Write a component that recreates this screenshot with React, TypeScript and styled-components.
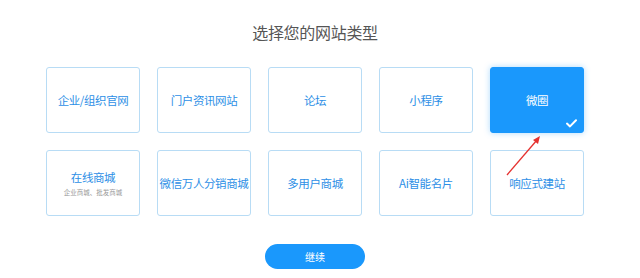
import { FC } from 'react';
import styled, { createGlobalStyle } from 'styled-components';

const GlobalStyle = createGlobalStyle`
  body {
    margin: 0;
    background: #fff;
    font-family: "Noto Sans CJK SC", "Liberation Sans", sans-serif;
  }
`;

type SiteType = {
  name: string;
  sub?: string;
  active?: boolean;
};

const types: SiteType[] = [
  { name: '企业/组织官网' },
  { name: '门户资讯网站' },
  { name: '论坛' },
  { name: '小程序' },
  { name: '微圈', active: true },
  { name: '在线商城', sub: '企业商城、批发商城' },
  { name: '微信万人分销商城' },
  { name: '多用户商城' },
  { name: 'Ai智能名片' },
  { name: '响应式建站' },
];

const TypeCard: FC<SiteType> = ({ name, sub, active }) => (
  <StyledCard $active={active}>
    <span className="name">{name}</span>
    {sub && <span className="sub">{sub}</span>}
    {active && (
      <Check width="11" height="9" viewBox="0 0 11 9">
        <path d="M1 4.6 L4 7.4 L10 1.2" fill="none" stroke="#fff" strokeWidth="2" strokeLinecap="round" strokeLinejoin="round" />
      </Check>
    )}
  </StyledCard>
);

const App: FC = () => (
  <>
    <GlobalStyle />
    <Page>
      <Title>选择您的网站类型</Title>
      <Grid>
        {types.map((t) => (
          <TypeCard key={t.name} {...t} />
        ))}
      </Grid>
      <NextButton>继续</NextButton>
      <Arrow width="40" height="44" viewBox="0 0 40 44">
        <line x1="3" y1="41" x2="33" y2="6" stroke="#e5312f" strokeWidth="1.3" />
        <path d="M36 2 L29 6 L34 10 Z" fill="#e5312f" />
      </Arrow>
    </Page>
  </>
);

const Page = styled.div`
  position: relative;
  width: 630px;
  height: 278px;
  display: flex;
  flex-direction: column;
  align-items: center;
  padding-top: 22px;
  box-sizing: border-box;
`;

const Title = styled.h1`
  margin: 0;
  font-size: 16px;
  line-height: 20px;
  font-weight: 400;
  color: #555;
  letter-spacing: -0.3px;
`;

const Grid = styled.div`
  margin-top: 25px;
  display: grid;
  grid-template-columns: repeat(5, 94px);
  grid-auto-rows: 66px;
  column-gap: 17px;
  row-gap: 17px;
`;

const StyledCard = styled.div<{ $active?: boolean }>`
  position: relative;
  display: flex;
  flex-direction: column;
  align-items: center;
  justify-content: center;
  border: 1px solid ${(p) => (p.$active ? '#1a98fc' : '#b8dcf5')};
  border-radius: 3px;
  background: ${(p) => (p.$active ? '#1a98fc' : '#fff')};
  box-sizing: border-box;
  box-shadow: ${(p) => (p.$active ? '0 0 6px rgba(26,152,252,0.35)' : 'none')};

  .name {
    font-size: 11.5px;
    line-height: 16px;
    color: ${(p) => (p.$active ? '#fff' : '#2d8fe6')};
    white-space: nowrap;
    letter-spacing: -0.4px;
  }
  .sub {
    font-size: 6.5px;
    line-height: 10px;
    color: #999;
    margin-top: 2px;
    white-space: nowrap;
  }
`;

const Check = styled.svg`
  position: absolute;
  right: 6px;
  bottom: 4px;
`;

const NextButton = styled.button`
  margin-top: 28px;
  width: 100px;
  height: 25px;
  border: none;
  border-radius: 13px;
  background: #1a98fc;
  color: #fff;
  font-family: inherit;
  font-size: 10px;
  cursor: pointer;
`;

const Arrow = styled.svg`
  position: absolute;
  left: 504px;
  top: 134px;
`;

export default App;
